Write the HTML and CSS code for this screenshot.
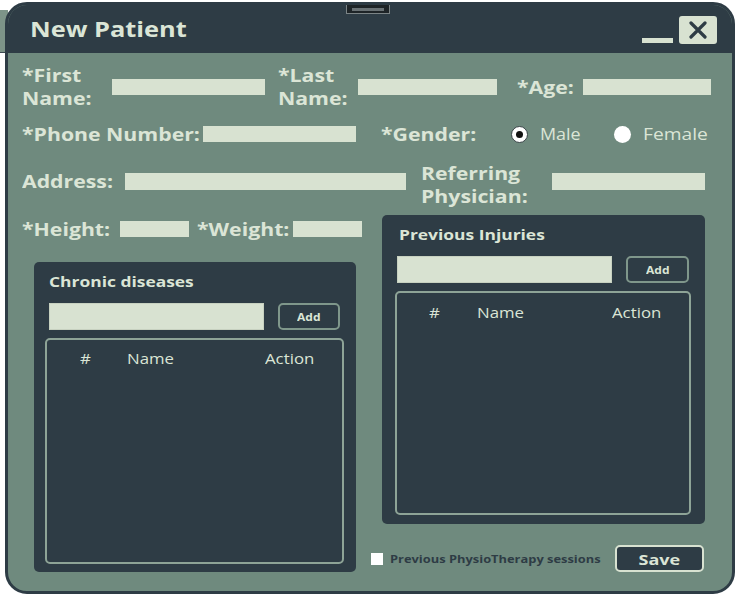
FILE: index.html
```html
<!DOCTYPE html>
<html>
<head>
<meta charset="utf-8">
<link rel="stylesheet" href="styles.css">
</head>
<body>
<div class="backdrop"></div>
<div class="window">
  <div class="grip"><span></span></div>
  <header class="titlebar">
    <h1 class="title">New Patient</h1>
    <div class="controls">
      <span class="minimize"></span>
      <button class="close" aria-label="Close">
        <svg width="20" height="18" viewBox="0 0 20 18"><path d="M3 2 L17 16 M17 2 L3 16" stroke="#2e3c45" stroke-width="3.2" stroke-linecap="round"/></svg>
      </button>
    </div>
  </header>
  <main class="body">
    <div class="row row-name">
      <label class="lbl lbl-first"><span class="wide">*First<br>Name:</span></label>
      <span class="input in-first"></span>
      <label class="lbl lbl-last"><span class="wide">*Last<br>Name:</span></label>
      <span class="input in-last"></span>
      <label class="lbl lbl-age"><span class="wide">*Age:</span></label>
      <span class="input in-age"></span>
    </div>
    <div class="row row-phone">
      <label class="lbl lbl-phone"><span class="wide">*Phone Number:</span></label>
      <span class="input in-phone"></span>
      <label class="lbl lbl-gender"><span class="wide">*Gender:</span></label>
      <span class="radio checked"></span><span class="opt opt-male"><span class="wide">Male</span></span>
      <span class="radio"></span><span class="opt"><span class="wide">Female</span></span>
    </div>
    <div class="row row-address">
      <label class="lbl lbl-address"><span class="wide">Address:</span></label>
      <span class="input in-address"></span>
      <label class="lbl lbl-ref"><span class="wide">Referring<br>Physician:</span></label>
      <span class="input in-ref"></span>
    </div>
    <div class="lower">
      <div class="col-left">
        <div class="row row-hw">
          <label class="lbl lbl-height"><span class="wide">*Height:</span></label>
          <span class="input in-small"></span>
          <label class="lbl lbl-weight"><span class="wide">*Weight:</span></label>
          <span class="input in-small"></span>
        </div>
        <section class="panel panel-chronic">
          <h2 class="panel-title"><span class="wide">Chronic diseases</span></h2>
          <div class="add-row">
            <span class="panel-input"></span>
            <button class="add"><span class="wide-c">Add</span></button>
          </div>
          <div class="table">
            <div class="thead"><span class="c-num">#</span><span class="c-name">Name</span><span class="c-act">Action</span></div>
          </div>
        </section>
      </div>
      <div class="col-right">
        <section class="panel panel-injuries">
          <h2 class="panel-title"><span class="wide">Previous Injuries</span></h2>
          <div class="add-row">
            <span class="panel-input"></span>
            <button class="add"><span class="wide-c">Add</span></button>
          </div>
          <div class="table">
            <div class="thead"><span class="c-num">#</span><span class="c-name">Name</span><span class="c-act">Action</span></div>
          </div>
        </section>
        <div class="footer">
          <span class="check"></span>
          <span class="check-label"><span class="wide">Previous PhysioTherapy sessions</span></span>
          <button class="save"><span class="wide-c">Save</span></button>
        </div>
      </div>
    </div>
  </main>
</div>
</body>
</html>
```
FILE: styles.css
```css
* { box-sizing: border-box; }
html, body { margin: 0; padding: 0; background: #ffffff; }
body { width: 740px; height: 599px; position: relative; overflow: hidden; font-family: "Open Sans", "Noto Sans", sans-serif; }

/* the reference text is rendered slightly stretched horizontally */
.wide { display: inline-block; transform: scaleX(1.2); transform-origin: left center; white-space: nowrap; }
.wide-c { display: inline-block; transform: scaleX(1.2); transform-origin: center center; }

.backdrop {
  position: absolute; left: 0; top: 10px; width: 8px; height: 43px;
  background: #7d9488; border-bottom: 1px solid #3a4850;
}

.window {
  position: relative;
  margin: 2px 0 0 5px;
  width: 730px; height: 592px;
  border: 3px solid #2e3c45;
  border-radius: 22px;
  background: #6f8a7e;
  overflow: hidden;
  display: flex; flex-direction: column;
}

.grip {
  position: absolute; left: 338px; top: -5px; width: 44px; height: 14px;
  background: #1e2427; border: 1px solid #7c8486;
  display: flex; align-items: center; justify-content: center;
}
.grip span { display: block; width: 32px; height: 3px; background: #6a7275; margin-top: 4px; }

.titlebar {
  height: 48px; flex: none;
  background: #2e3c45;
  display: flex; align-items: center; justify-content: space-between;
  padding: 0 15px 0 22px;
}
.title {
  margin: 0; font-size: 21px; font-weight: 700; color: #dbe5d6;
  display: block; transform: scaleX(1.21); transform-origin: left center; white-space: nowrap;
}
.controls { display: flex; align-items: flex-end; gap: 6px; margin-top: 2px; }
.minimize { width: 31px; height: 5px; background: #d8e2d1; margin-bottom: 1px; }
.close {
  width: 38px; height: 28px; border: none; border-radius: 3px; padding: 0;
  background: #d8e2d1; display: flex; align-items: center; justify-content: center;
}

.body { flex: 1; padding: 11px 0 0 14px; color: #dbe5d6; }

.row { display: flex; align-items: center; }
.lbl { font-weight: 700; font-size: 17px; line-height: 23px; color: #dbe5d6; flex: none; }
.lbl .wide { transform: scaleX(1.25); }
.input { display: block; flex: none; height: 16px; background: #d8e2d1; }

.row-name { height: 46px; }
.lbl-first { width: 90px; }
.in-first { width: 153px; }
.lbl-last { width: 80px; margin-left: 13px; }
.in-last { width: 139px; }
.lbl-age { width: 66px; margin-left: 20px; }
.in-age { width: 128px; }

.row-phone { height: 28px; margin-top: 10px; }
.lbl-phone { width: 181px; }
.in-phone { width: 153px; }
.lbl-gender { width: 130px; margin-left: 25px; }
.radio {
  width: 17px; height: 17px; border-radius: 50%; background: #ffffff; flex: none;
  display: flex; align-items: center; justify-content: center;
}
.radio.checked { border: 1px solid #3a4448; }
.radio.checked::after { content: ""; width: 7px; height: 7px; border-radius: 50%; background: #111; }
.opt { font-size: 16px; color: #dbe5d6; margin-left: 12px; flex: none; }
.opt-male { width: 74px; }
.opt-male .wide { transform: scaleX(1.12); }

.row-address { height: 47px; margin-top: 10px; }
.lbl-address { width: 103px; }
.in-address { width: 281px; height: 17px; }
.lbl-ref { width: 131px; margin-left: 15px; margin-top: 6px; }
.in-ref { width: 153px; height: 17px; }

.lower { display: flex; margin-top: 10px; }
.col-left { width: 349px; flex: none; }
.col-right { width: 334px; flex: none; }

.row-hw { height: 28px; }
.lbl-height { width: 98px; }
.in-small { width: 69px; }
.lbl-weight { width: 96px; margin-left: 8px; }

.panel {
  background: #2e3c45; border-radius: 5px;
  display: flex; flex-direction: column;
}
.panel-chronic { width: 322px; height: 310px; margin: 19px 0 0 12px; padding: 10px 12px 8px 11px; }
.panel-injuries { width: 323px; height: 309px; margin-left: 11px; padding: 10px 14px 9px 13px; }
.panel-title { margin: 0 0 0 4px; font-size: 14.5px; line-height: 20px; font-weight: 700; color: #dbe5d6; }
.add-row { display: flex; align-items: center; margin-top: 11px; padding-left: 4px; }
.panel-injuries .add-row { padding-left: 2px; }
.panel-input { display: block; width: 215px; height: 27px; background: #d8e2d1; border: 1px solid #c7d1c0; }
.add {
  margin-left: 14px; width: 62px; height: 27px;
  background: #2e3c45; border: 2px solid #7f978b; border-radius: 5px;
  color: #dbe5d6; font-family: "Open Sans", sans-serif; font-weight: 700; font-size: 10px; padding: 0;
}
.panel-injuries .add { width: 63px; }
.table {
  flex: 1; margin-top: 8px;
  border: 2px solid #8ea497; border-radius: 5px;
}
.thead { position: relative; height: 38px; font-size: 14px; color: #dbe5d6; }
.thead span { position: absolute; top: 9px; display: inline-block; transform: scaleX(1.2); transform-origin: left center; }
.panel-injuries .thead span { top: 10px; }
.c-num { left: 33px; }
.c-name { left: 80px; }
.c-act { left: 218px; }
.panel-injuries .c-num { left: 32px; }
.panel-injuries .c-name { left: 80px; }
.panel-injuries .c-act { left: 215px; }

.footer { display: flex; align-items: center; margin-top: 21px; height: 27px; }
.check { width: 12px; height: 12px; background: #ffffff; flex: none; }
.check-label { margin-left: 7px; font-size: 11px; font-weight: 700; color: #2e3c45; width: 225px; flex: none; }
.check-label .wide { transform: scaleX(1.17); }
.save {
  width: 89px; height: 27px; background: #2e3c45; flex: none;
  border: 2px solid #d8e2d1; border-radius: 5px;
  color: #dbe5d6; font-family: "Open Sans", sans-serif; font-weight: 700; font-size: 15px; padding: 0;
}
```
